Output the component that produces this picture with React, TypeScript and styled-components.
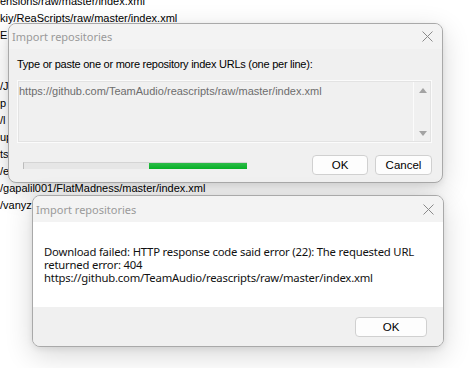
import React from "react";
import styled, { createGlobalStyle } from "styled-components";

const GlobalStyle = createGlobalStyle`
  html, body { margin: 0; padding: 0; background: #ffffff; overflow: hidden; }
  * { box-sizing: border-box; }
`;

const Desktop = styled.div`
  position: relative;
  width: 470px;
  height: 368px;
  overflow: hidden;
  background: #ffffff;
`;

const BackList = styled.div`
  display: flex;
  flex-direction: column;
  margin-top: -7px;
  font-family: "Liberation Sans", Arial, sans-serif;
  font-size: 11px;
  color: #000;
`;

const BackLine = styled.div`
  height: 17px;
  line-height: 17px;
  white-space: pre;
`;

const Window = styled.div<{ $left: number; $top: number; $w: number; $h: number }>`
  position: absolute;
  left: ${(p) => p.$left}px;
  top: ${(p) => p.$top}px;
  width: ${(p) => p.$w}px;
  height: ${(p) => p.$h}px;
  display: flex;
  flex-direction: column;
  background: #f0f0f0;
  border: 1px solid #a9a9a9;
  border-radius: 8px;
  overflow: hidden;
  box-shadow: 0 8px 28px rgba(0, 0, 0, 0.16), 0 2px 6px rgba(0, 0, 0, 0.08);
`;

const TitleBar = styled.div<{ $h: number }>`
  height: ${(p) => p.$h}px;
  flex: 0 0 auto;
  display: flex;
  align-items: center;
  justify-content: space-between;
  padding: 0 9px 0 3px;
  background: #f3f3f3;
`;

const Title = styled.span`
  font-family: "Noto Sans", "Open Sans", sans-serif;
  font-size: 11px;
  color: #9a9a9a;
`;

const CloseIcon = () => (
  <svg width="11" height="11" viewBox="0 0 11 11">
    <path d="M0.5 0.5 L10.5 10.5 M10.5 0.5 L0.5 10.5" stroke="#8a8a8a" strokeWidth="1" fill="none" />
  </svg>
);

const Content = styled.div`
  flex: 1;
  display: flex;
  flex-direction: column;
  padding: 9px 10px 0 8px;
  font-family: "Liberation Sans", Arial, sans-serif;
  font-size: 11px;
`;

const Label = styled.div`
  color: #000;
  line-height: 13px;
  height: 13px;
  letter-spacing: -0.25px;
  white-space: nowrap;
`;

const TextBox = styled.div`
  margin-top: 9px;
  height: 63px;
  display: flex;
  background: #f0f0f0;
  border: 1px solid #fbfbfb;
  outline: 1px solid #e3e3e3;
  outline-offset: -2px;
`;

const TextValue = styled.div`
  flex: 1;
  padding: 4px 1px;
  color: #6d6d6d;
  line-height: 13px;
`;

const ScrollBar = styled.div`
  width: 18px;
  display: flex;
  flex-direction: column;
  justify-content: space-between;
  align-items: center;
  padding: 7px 0 6px;
  border-left: 1px solid #fbfbfb;
`;

const Arrow = ({ up }: { up?: boolean }) => (
  <svg width="8" height="5" viewBox="0 0 8 5">
    <path d={up ? "M0 5 L4 0 L8 5 Z" : "M0 0 L8 0 L4 5 Z"} fill="#a3a3a3" />
  </svg>
);

const BottomRow = styled.div`
  margin-top: 12px;
  display: flex;
  align-items: center;
  justify-content: space-between;
`;

const Progress = styled.div`
  margin-left: 6px;
  width: 224px;
  height: 7px;
  display: flex;
  justify-content: flex-end;
  background: #e6e6e6;
  border-left: 1px solid #bcbcbc;
  border-top: 1px solid #d4d4d4;
`;

const ProgressFill = styled.div`
  height: 100%;
  background: linear-gradient(#2dbb49, #06b025);
`;

const Buttons = styled.div`
  display: flex;
  gap: 7px;
`;

const Button = styled.button<{ $w: number }>`
  width: ${(p) => p.$w}px;
  height: 20px;
  padding: 0;
  background: #fdfdfd;
  border: 1px solid #d0d0d0;
  border-radius: 4px;
  font-family: "Liberation Sans", Arial, sans-serif;
  font-size: 11.5px;
  color: #000;
`;

const Message = styled.div`
  height: 85px;
  flex: 0 0 auto;
  background: #ffffff;
  padding: 23px 8px 0 11px;
  font-family: "Noto Sans", "Open Sans", sans-serif;
  font-size: 11.3px;
  letter-spacing: -0.2px;
  line-height: 13px;
  white-space: nowrap;
  color: #111;
`;

const Footer = styled.div`
  flex: 1;
  display: flex;
  justify-content: flex-end;
  align-items: flex-start;
  padding: 10px 16px 0 0;
  background: #f0f0f0;
`;

const backLines = [
  "ensions/raw/master/index.xml",
  "kiy/ReaScripts/raw/master/index.xml",
  "E",
  " ",
  " ",
  "/J",
  "p",
  "/l",
  "up",
  "ts",
  "/e",
  "/gapalil001/FlatMadness/master/index.xml",
  "/vanyz",
];

export default function App() {
  return (
    <Desktop>
      <GlobalStyle />
      <BackList>
        {backLines.map((l, i) => (
          <BackLine key={i}>{l}</BackLine>
        ))}
      </BackList>

      <Window $left={8} $top={23} $w={435} $h={160}>
        <TitleBar $h={25}>
          <Title>Import repositories</Title>
          <CloseIcon />
        </TitleBar>
        <Content>
          <Label>Type or paste one or more repository index URLs (one per line):</Label>
          <TextBox>
            <TextValue>https://github.com/TeamAudio/reascripts/raw/master/index.xml</TextValue>
            <ScrollBar>
              <Arrow up />
              <Arrow />
            </ScrollBar>
          </TextBox>
          <BottomRow>
            <Progress>
              <ProgressFill style={{ width: "44%" }} />
            </Progress>
            <Buttons>
              <Button $w={56}>OK</Button>
              <Button $w={57}>Cancel</Button>
            </Buttons>
          </BottomRow>
        </Content>
      </Window>

      <Window $left={32} $top={195} $w={412} $h={152}>
        <TitleBar $h={26}>
          <Title>Import repositories</Title>
          <CloseIcon />
        </TitleBar>
        <Message>
          Download failed: HTTP response code said error (22): The requested URL
          <br />
          returned error: 404
          <br />
          https://github.com/TeamAudio/reascripts/raw/master/index.xml
        </Message>
        <Footer>
          <Button $w={72}>OK</Button>
        </Footer>
      </Window>
    </Desktop>
  );
}
